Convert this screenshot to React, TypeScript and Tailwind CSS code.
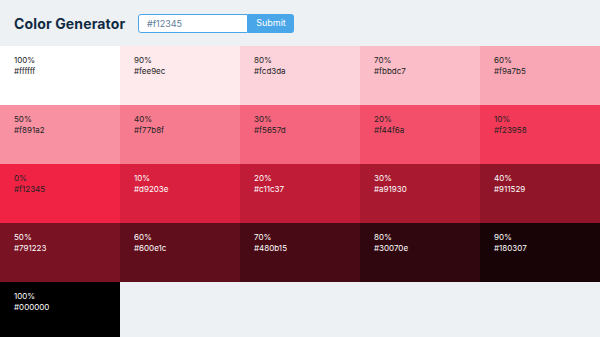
import React from "react"

const colors: { weight: number; hex: string }[] = [
  { weight: 100, hex: "ffffff" },
  { weight: 90, hex: "fee9ec" },
  { weight: 80, hex: "fcd3da" },
  { weight: 70, hex: "fbbdc7" },
  { weight: 60, hex: "f9a7b5" },
  { weight: 50, hex: "f891a2" },
  { weight: 40, hex: "f77b8f" },
  { weight: 30, hex: "f5657d" },
  { weight: 20, hex: "f44f6a" },
  { weight: 10, hex: "f23958" },
  { weight: 0, hex: "f12345" },
  { weight: 10, hex: "d9203e" },
  { weight: 20, hex: "c11c37" },
  { weight: 30, hex: "a91930" },
  { weight: 40, hex: "911529" },
  { weight: 50, hex: "791223" },
  { weight: 60, hex: "600e1c" },
  { weight: 70, hex: "480b15" },
  { weight: 80, hex: "30070e" },
  { weight: 90, hex: "180307" },
  { weight: 100, hex: "000000" },
]

function SingleColor({ weight, hex, index }: { weight: number; hex: string; index: number }) {
  const light = index > 10
  return (
    <article
      className={light ? "h-[59px] px-[14px] pt-[9px] text-white" : "h-[59px] px-[14px] pt-[9px] text-[#222]"}
      style={{ backgroundColor: `#${hex}` }}
    >
      <p className="text-[8px] leading-[11px]">{weight}%</p>
      <p className="text-[8px] leading-[11px]">#{hex}</p>
    </article>
  )
}

export default function App() {
  return (
    <main className="min-h-screen bg-[#edf1f4] font-['Inter',sans-serif]">
      <section className="h-[46px] flex items-center px-[14px]">
        <h3 className="w-[108px] text-[14px] font-bold tracking-[0.01em] text-[#102a42] mr-[16px] whitespace-nowrap">
          Color Generator
        </h3>
        <form className="flex" onSubmit={(e) => e.preventDefault()}>
          <input
            type="text"
            defaultValue="#f12345"
            className="w-[110px] h-[19px] px-[8px] text-[9px] text-[#617d98] bg-white border border-[#49a6e9] rounded-l-[3px] outline-none"
          />
          <button type="submit" className="w-[46px] h-[19px] text-[9px] text-white bg-[#49a6e9] rounded-r-[3px]">
            Submit
          </button>
        </form>
      </section>
      <section className="grid grid-cols-5">
        {colors.map((c, i) => (
          <SingleColor key={i} index={i} weight={c.weight} hex={c.hex} />
        ))}
      </section>
    </main>
  )
}
